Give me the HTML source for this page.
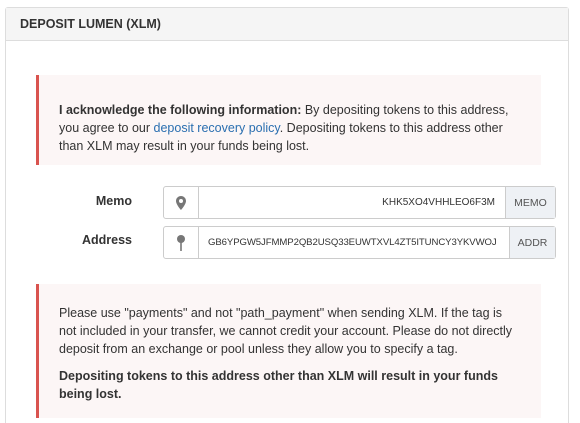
<!DOCTYPE html>
<html><head><style>
html,body{margin:0;background:#fff;font-family:"Liberation Sans",sans-serif;font-size:12.5px;color:#333;width:580px;height:423px;overflow:hidden;position:relative}
.panel{position:absolute;left:5px;top:7px;width:564px;height:416px;border:1px solid #ddd;border-bottom:none;border-radius:3px 3px 0 0;box-sizing:border-box}
.hd{height:32px;background:#f5f5f5;border-bottom:1px solid #ddd;font-weight:bold;font-size:12.5px;line-height:32px;padding-left:14px;color:#333}
.alert{position:absolute;left:36px;background:#fcf6f6;border-left:3px solid #d9534f;padding:0 0 0 20px;line-height:18px;box-sizing:border-box;width:505px}
.alert p{margin:0;padding-right:18px}
a{color:#2a6fb0;text-decoration:none}
.lbl{position:absolute;left:60px;width:72px;text-align:right;font-weight:bold;font-size:12.5px}
.grp{position:absolute;left:163px;width:393px;height:33px;border:1px solid #ccc;border-radius:3px;box-sizing:border-box;display:flex;font-size:10px}
.ic{width:34px;border-right:1px solid #ccc;display:flex;align-items:center;justify-content:center}
.val{flex:1;display:flex;align-items:center;padding:0 10px;white-space:nowrap;overflow:hidden}
.add{background:#eef1f5;border-left:1px solid #ccc;display:flex;align-items:center;justify-content:center;color:#555;font-size:10.5px}
</style></head><body>
<div class="panel"><div class="hd">DEPOSIT LUMEN (XLM)</div></div>
<div class="alert" style="top:75px;height:90px;padding-top:26px">
<p><b>I acknowledge the following information:</b> By depositing tokens to this address, you agree to our <a>deposit recovery policy</a>. Depositing tokens to this address other than XLM may result in your funds being lost.</p></div>
<div class="lbl" style="top:194px">Memo</div>
<div class="grp" style="top:186px"><div class="ic"><svg width="10" height="14" viewBox="0 0 10 14"><path d="M5 0C2.2 0 0 2.2 0 5c0 3.5 5 9 5 9s5-5.5 5-9C10 2.2 7.8 0 5 0zm0 7a2 2 0 110-4 2 2 0 010 4z" fill="#777"/></svg></div><div class="val" style="justify-content:flex-end">KHK5XO4VHHLEO6F3M</div><div class="add" style="width:49px">MEMO</div></div>
<div class="lbl" style="top:233px">Address</div>
<div class="grp" style="top:226px"><div class="ic"><svg width="8" height="16" viewBox="0 0 8 16"><circle cx="4" cy="4" r="4" fill="#777"/><rect x="3.2" y="7" width="1.6" height="9" fill="#777"/></svg></div><div class="val" style="padding-left:9px;font-size:9.6px;letter-spacing:-0.1px">GB6YPGW5JFMMP2QB2USQ33EUWTXVL4ZT5ITUNCY3YKVWOJ</div><div class="add" style="width:45px">ADDR</div></div>
<div class="alert" style="top:284px;height:134px;padding-top:20px">
<p style="padding-right:22px">Please use "payments" and not "path_payment" when sending XLM. If the tag is not included in your transfer, we cannot credit your account. Please do not directly deposit from an exchange or pool unless they allow you to specify a tag.</p>
<p style="margin-top:9px;font-weight:bold">Depositing tokens to this address other than XLM will result in your funds being lost.</p></div>
</body></html>
